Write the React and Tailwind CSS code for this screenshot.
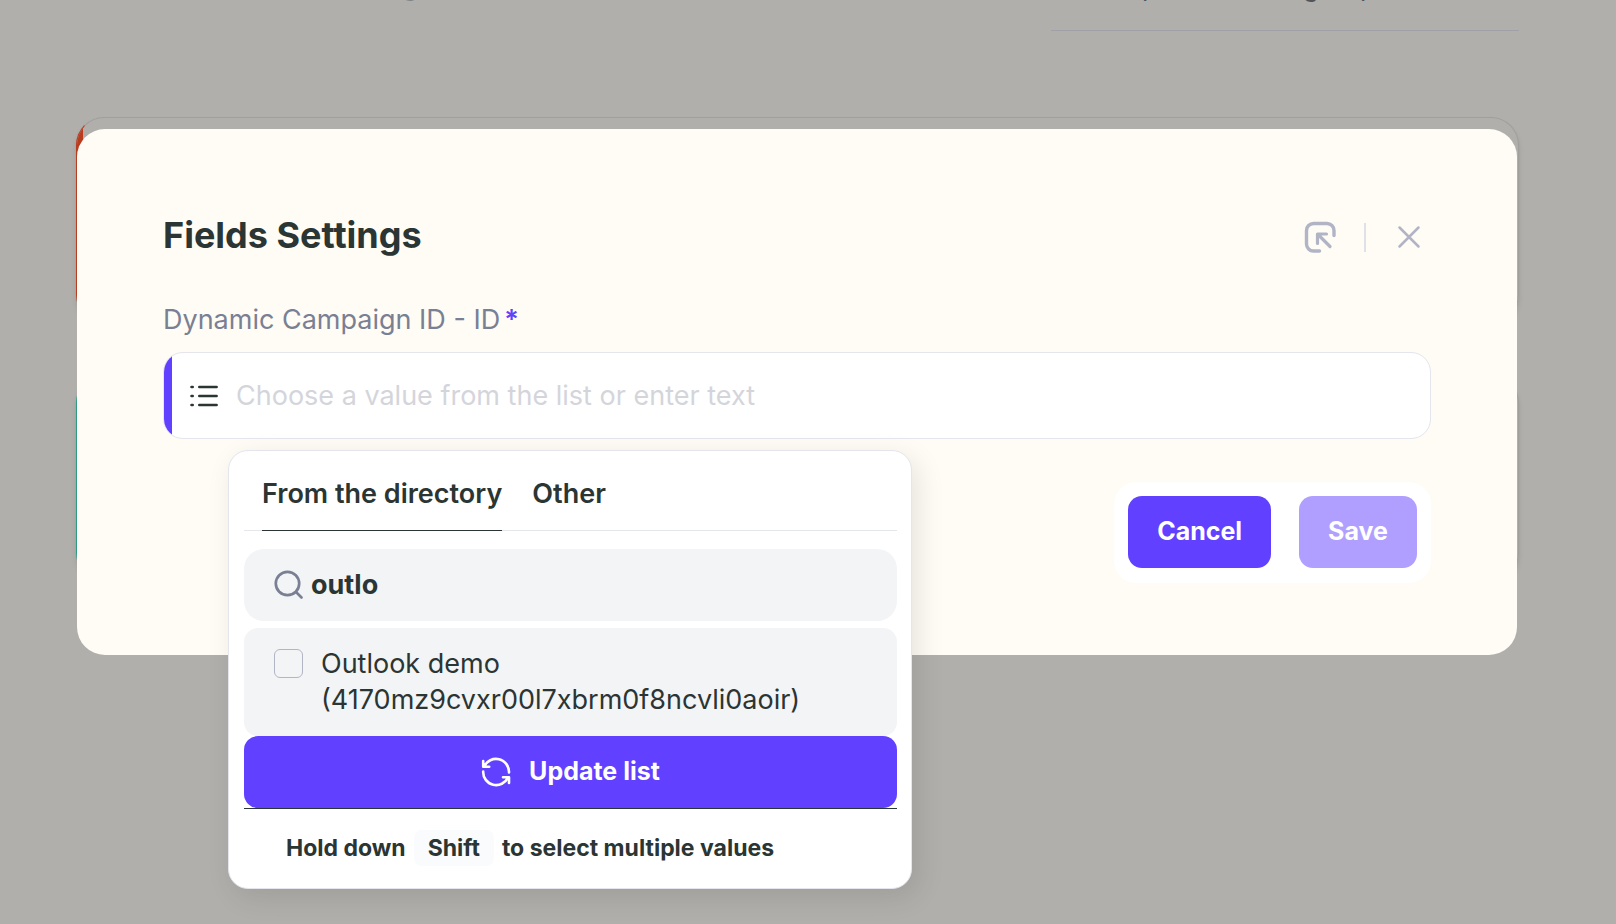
import { useState } from "react";

function OpenIcon() {
  return (
    <svg width="32" height="32" viewBox="0 0 32 32" fill="none" stroke="currentColor" strokeLinecap="round" strokeLinejoin="round">
      <path strokeWidth="3.4" d="M15.5 30H9.500a7 7 0 0 1-7-7V9.500a7 7 0 0 1 7-7H23a7 7 0 0 1 7 7v5" />
      <path strokeWidth="3.200" d="M13.500 22.500v-9.500h9M14 13.500l12 12" />
    </svg>
  );
}

function CloseIcon() {
  return (
    <svg width="24" height="24" viewBox="0 0 24 24" fill="none" stroke="currentColor" strokeWidth="2.500" strokeLinecap="round">
      <path d="M2.500 2.500l19 19M21.500 2.500l-19 19" />
    </svg>
  );
}

function ListIcon() {
  return (
    <svg width="28" height="22" viewBox="0 0 28 22" fill="none" stroke="currentColor" strokeWidth="2.600" strokeLinecap="round">
      <path d="M9.300 2h17.300M9.300 11h17.300M9.300 20h17.300M1.500 2h1.200M1.500 11h1.200M1.500 20h1.200" />
    </svg>
  );
}

function SearchIcon() {
  return (
    <svg width="30" height="30" viewBox="0 0 30 30" fill="none" stroke="currentColor" strokeWidth="2.700" strokeLinecap="round">
      <circle cx="13.500" cy="13.500" r="11.700" />
      <path d="M22 22l5.500 5.500" />
    </svg>
  );
}

function RefreshIcon() {
  return (
    <svg width="30" height="30" viewBox="0 0 30 30" fill="none" stroke="currentColor" strokeWidth="2.600" strokeLinecap="round" strokeLinejoin="round">
      <path d="M2.200 4v5.700h6M3.200 9.500A13 13 0 0 1 28 15.500" />
      <path d="M28 26v-5.700h-6M27 20.500A13 13 0 0 1 2.200 14.500" />
    </svg>
  );
}

// Page behind the overlay, already dimmed
function Backdrop() {
  return (
    <div aria-hidden="true" className="pl-[76px] pr-[97px]">
      <div className="h-[31px] overflow-hidden flex justify-between text-[26px] leading-8 text-[#4f565b]">
        <div className="-mt-[30px] pl-[326px] text-[#7f858b]">g</div>
        <div className="w-[468px] border-b border-[#a0a1a8]">
          <div className="-mt-[29px] flex pl-[91px]">
            <span className="w-[161px]">p</span>
            <span className="w-[57px]">g</span>
            <span>p</span>
          </div>
        </div>
      </div>
      <div className="mt-[86px] h-[206px] rounded-[28px] border border-[#a09f9b] border-l-[#b93c1f] shadow-md overflow-hidden">
        <div className="h-full w-[6px] bg-[#b93c1f]" />
      </div>
      <div className="mt-[52px] h-[206px] rounded-[28px] border border-[#a09f9b] border-l-[#2b9c83] shadow-md overflow-hidden">
        <div className="h-full w-[6px] bg-[#2b9c83]" />
      </div>
    </div>
  );
}

function Dropdown() {
  const [tab, setTab] = useState("directory");
  const [query, setQuery] = useState("outlo");

  const tabs = [
    { id: "directory", title: "From the directory" },
    { id: "other", title: "Other" },
  ];

  return (
    <div className="absolute left-[65px] top-full mt-[11px] w-[684px] rounded-[20px] border border-[#e4e5ed] bg-white pl-[15px] pr-[14px] pb-[22px] shadow-[6px_8px_28px_rgba(0,0,0,0.1)]">
      <div role="tablist" className="flex gap-[30px] border-b border-[#e5e6ea] pl-[18px]">
        {tabs.map((t) => (
          <button
            key={t.id}
            role="tab"
            aria-selected={tab === t.id}
            onClick={() => setTab(t.id)}
            className={`-mb-px border-b pt-[25px] pb-[18px] text-[27px] leading-9 font-semibold ${
              tab === t.id ? "border-[#2b3533]" : "border-transparent"
            }`}
          >
            {t.title}
          </button>
        ))}
      </div>

      <label className="mt-[18px] flex h-[72px] items-center gap-[7px] rounded-[20px] bg-[#f3f4f6] pl-[30px] pr-6">
        <span className="text-[#7a8094]">
          <SearchIcon />
        </span>
        <input
          type="text"
          aria-label="Search"
          value={query}
          onChange={(e) => setQuery(e.target.value)}
          className="min-w-0 flex-1 bg-transparent text-[27px] leading-9 font-bold outline-none"
        />
      </label>

      <label className="mt-[7px] flex gap-[18px] rounded-[14px] bg-[#f3f4f6] py-[18px] pl-[30px] pr-6 text-[27px] leading-9">
        <input
          type="checkbox"
          className="mt-[3px] size-[29px] shrink-0 appearance-none rounded-md border border-[#b2b5c6] checked:bg-[#6140ff]"
        />
        <span>
          Outlook demo
          <br />
          (4170mz9cvxr00l7xbrm0f8ncvli0aoir)
        </span>
      </label>

      <div className="border-b border-[#2b3533]">
        <button className="flex h-[72px] w-full items-center justify-center gap-[18px] rounded-[14px] bg-[#6140ff] text-[25px] font-bold text-white">
          <RefreshIcon />
          Update list
        </button>
      </div>

      <p className="mt-[21px] flex items-center gap-2 pl-[42px] text-[23px] leading-9 font-bold">
        Hold down
        <kbd className="rounded-lg bg-[#fafbfd] px-[14px] font-[Inter,sans-serif]">Shift</kbd>
        to select multiple values
      </p>
    </div>
  );
}

export default function App() {
  const [value, setValue] = useState("");

  return (
    <div className="relative min-h-screen overflow-hidden bg-[#b0afab] font-[Inter,sans-serif] text-[#2b3533]">
      <Backdrop />

      <div className="absolute inset-0 pt-[129px] pl-[77px] pr-[99px]">
        <div role="dialog" aria-labelledby="dialog-title" className="rounded-[28px] bg-[#fffcf5] px-[86px] pt-[84px] pb-[72px]">
          <div className="flex items-center justify-between">
            <h2 id="dialog-title" className="text-[36px] leading-[44px] font-bold">
              Fields Settings
            </h2>
            <div className="flex items-center gap-7 pt-1 pr-[10px] text-[#b0b4c5]">
              <button aria-label="Open in side panel">
                <OpenIcon />
              </button>
              <div className="h-[29px] w-[2px] bg-[#dfe0e8]" />
              <button aria-label="Close" className="pl-[3px]">
                <CloseIcon />
              </button>
            </div>
          </div>

          <label htmlFor="campaign-id" className="mt-[45px] block text-[27px] leading-9 text-[#7a8094]">
            Dynamic Campaign ID - ID
            <span className="ml-1 font-semibold text-[#6140ff]">*</span>
          </label>

          <div className="relative mt-[14px]">
            <div className="flex h-[87px] items-stretch overflow-hidden rounded-[20px] border border-[#e4e5ed] bg-white">
              <div className="w-2 bg-[#6140ff]" />
              <div className="flex items-center px-[18px]">
                <ListIcon />
              </div>
              <input
                id="campaign-id"
                type="text"
                value={value}
                onChange={(e) => setValue(e.target.value)}
                placeholder="Choose a value from the list or enter text"
                className="min-w-0 flex-1 pt-[2px] text-[27px] outline-none placeholder:text-[#d4d5db]"
              />
            </div>
            <Dropdown />
          </div>

          <div className="mt-[43px] flex justify-end">
            <div className="flex gap-7 rounded-[22px] bg-white px-[14px] pt-[14px] pb-[15px] text-[25px] font-bold text-white">
              <button className="h-[72px] rounded-[14px] bg-[#6140ff] px-[29px]">Cancel</button>
              <button disabled className="h-[72px] rounded-[14px] bg-[#b09fff] px-[29px]">
                Save
              </button>
            </div>
          </div>
        </div>
      </div>
    </div>
  );
}
